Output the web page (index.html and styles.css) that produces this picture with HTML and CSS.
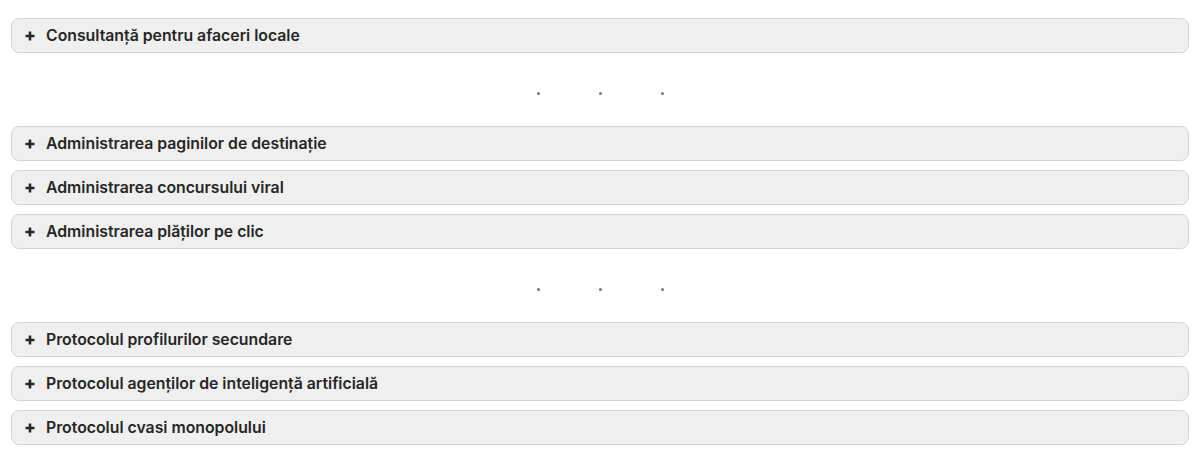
FILE: index.html
```html
<!DOCTYPE html>
<html lang="ro">
<head>
  <meta charset="UTF-8">
  <meta name="viewport" content="width=device-width, initial-scale=1.0">
  <title>Servicii</title>
  <link rel="stylesheet" href="styles.css">
</head>
<body>
  <div class="list">
    <details class="item">
      <summary><svg class="plus" viewBox="0 0 10 10"><path d="M5 0.5v9M0.5 5h9"/></svg>Consultanță pentru afaceri locale</summary>
    </details>
  </div>

  <!-- separator -->
  <div class="dots"><span></span><span></span><span></span></div>

  <div class="list">
    <details class="item">
      <summary><svg class="plus" viewBox="0 0 10 10"><path d="M5 0.5v9M0.5 5h9"/></svg>Administrarea paginilor de destinație</summary>
    </details>
    <details class="item">
      <summary><svg class="plus" viewBox="0 0 10 10"><path d="M5 0.5v9M0.5 5h9"/></svg>Administrarea concursului viral</summary>
    </details>
    <details class="item">
      <summary><svg class="plus" viewBox="0 0 10 10"><path d="M5 0.5v9M0.5 5h9"/></svg>Administrarea plăților pe clic</summary>
    </details>
  </div>

  <div class="dots"><span></span><span></span><span></span></div>

  <div class="list">
    <details class="item">
      <summary><svg class="plus" viewBox="0 0 10 10"><path d="M5 0.5v9M0.5 5h9"/></svg>Protocolul profilurilor secundare</summary>
    </details>
    <details class="item">
      <summary><svg class="plus" viewBox="0 0 10 10"><path d="M5 0.5v9M0.5 5h9"/></svg>Protocolul agenților de inteligență artificială</summary>
    </details>
    <details class="item">
      <summary><svg class="plus" viewBox="0 0 10 10"><path d="M5 0.5v9M0.5 5h9"/></svg>Protocolul cvasi monopolului</summary>
    </details>
  </div>
</body>
</html>
```

FILE: styles.css
```css
body {
  margin: 0;
  padding: 18px 11px;
  background-color: #fff;
  font-family: Inter, "Noto Sans", sans-serif;
  color: #262626;
}

.list {
  display: flex;
  flex-direction: column;
  gap: 9px;
}

.item {
  background-color: #efefef;
  border: 1px solid #d4d4d4;
  border-radius: 8px;
}

.item summary {
  display: flex;
  align-items: center;
  height: 33px;
  padding: 0 13px;
  list-style: none;
  font-size: 15.8px;
  font-weight: 600;
  cursor: pointer;
}

.item summary::-webkit-details-marker {
  display: none;
}

.plus {
  width: 10px;
  height: 10px;
  margin-right: 11px;
  stroke: #262626;
  stroke-width: 2.6;
  fill: none;
}

.dots {
  display: flex;
  justify-content: center;
  align-items: center;
  gap: 59px;
  box-sizing: border-box;
  height: 73px;
  padding-top: 8px;
  padding-left: 1px;
}

.dots span {
  width: 3px;
  height: 3px;
  border-radius: 50%;
  background-color: #777;
}
```
